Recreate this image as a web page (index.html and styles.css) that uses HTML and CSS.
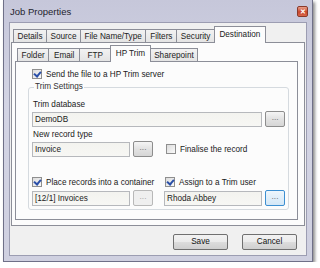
FILE: index.html
```html
<!DOCTYPE html>
<html lang="en">
<head>
    <meta charset="UTF-8">
    <title>Job Properties</title>
    <link rel="stylesheet" href="styles.css">
</head>
<body>
    <div class="window">
        <div class="titlebar">
            <span class="title">Job Properties</span>
            <span class="close-btn">&#x2715;</span>
        </div>
        <div class="client">
            <div class="tabs outer-tabs">
                <div class="tab">Details</div>
                <div class="tab">Source</div>
                <div class="tab">File Name/Type</div>
                <div class="tab">Filters</div>
                <div class="tab">Security</div>
                <div class="tab active">Destination</div>
            </div>
            <div class="panel outer-panel">
                <div class="tabs inner-tabs">
                    <div class="tab">Folder</div>
                    <div class="tab">Email</div>
                    <div class="tab">FTP</div>
                    <div class="tab active">HP Trim</div>
                    <div class="tab">Sharepoint</div>
                </div>
                <div class="panel inner-panel">
                    <div class="check-row send-row">
                        <span class="checkbox checked"></span>
                        <span>Send the file to a HP Trim server</span>
                    </div>
                    <div class="group">
                        <div class="group-title">Trim Settings</div>
                        <div class="field-label first">Trim database</div>
                        <div class="field-row">
                            <div class="textbox wide">DemoDB</div>
                            <div class="dots-btn">...</div>
                        </div>
                        <div class="field-label">New record type</div>
                        <div class="field-row tight">
                            <div class="textbox">Invoice</div>
                            <div class="dots-btn">...</div>
                            <div class="check-row side">
                                <span class="checkbox"></span>
                                <span>Finalise the record</span>
                            </div>
                        </div>
                        <div class="two-col check-line">
                            <div class="check-row">
                                <span class="checkbox checked"></span>
                                <span>Place records into a container</span>
                            </div>
                            <div class="check-row">
                                <span class="checkbox checked"></span>
                                <span>Assign to a Trim user</span>
                            </div>
                        </div>
                        <div class="two-col input-line">
                            <div class="field-row">
                                <div class="textbox">[12/1] Invoices</div>
                                <div class="dots-btn disabled">...</div>
                            </div>
                            <div class="field-row">
                                <div class="textbox">Rhoda Abbey</div>
                                <div class="dots-btn focused">...</div>
                            </div>
                        </div>
                    </div>
                </div>
            </div>
            <div class="buttons">
                <div class="btn">Save</div>
                <div class="btn">Cancel</div>
            </div>
        </div>
    </div>
</body>
</html>
```

FILE: styles.css
```css
body {
    margin: 0;
    background: #ffffff;
    font-family: 'Liberation Sans', Arial, sans-serif;
    font-size: 8.2px;
    color: #1a1a1a;
}
.window {
    margin-left: 3px;
    width: 310px;
    height: 262px;
    box-sizing: border-box;
    display: flex;
    flex-direction: column;
    padding: 0 5px 5px 5px;
    background: linear-gradient(#c6c7da, #d3d4e4 40%, #cfd0e0);
    border: 1px solid #6f7088;
    border-top: none;
    box-shadow: 2px 2px 3px rgba(0,0,0,0.45);
}
.titlebar {
    height: 22px;
    display: flex;
    align-items: center;
    justify-content: space-between;
}
.title {
    padding-left: 1px;
    font-size: 9.5px;
    color: #24242e;
}
.close-btn {
    width: 11px;
    height: 11px;
    margin-top: 1px;
    margin-right: -1px;
    box-sizing: border-box;
    border: 1px solid #8a3a2a;
    border-radius: 2px;
    background: linear-gradient(#e9a08a, #c8452c 55%, #d9664a);
    color: #ffffff;
    font-size: 7px;
    font-weight: bold;
    line-height: 9px;
    text-align: center;
}
.client {
    flex: 1;
    background: #f0f0f0;
    border: 1px solid #9c9db2;
    display: flex;
    flex-direction: column;
    padding: 3px 1px 0 1px;
}
.tabs {
    display: flex;
    align-items: flex-end;
    position: relative;
    z-index: 1;
}
.tab {
    min-width: 31px;
    box-sizing: border-box;
    height: 13px;
    line-height: 13px;
    padding: 0 3.5px;
    text-align: center;
    white-space: nowrap;
    border: 1px solid #8c8e98;
    border-bottom: none;
    border-right: none;
    background: linear-gradient(#f2f2f2, #e4e4e4);
    color: #222;
}
.tab:last-child {
    border-right: 1px solid #8c8e98;
}
.tab.active {
    height: 17px;
    line-height: 15px;
    padding: 0 4.5px;
    background: #fcfcfc;
    margin-bottom: -1px;
    border-right: 1px solid #8c8e98;
}
.tab.active + .tab {
    border-left: none;
}
.outer-tabs {
    padding-left: 2px;
}
.panel {
    border: 1px solid #8c8e98;
    background: #fcfcfc;
}
.outer-panel {
    height: 184px;
    box-sizing: border-box;
    padding: 2px 6px 0 3px;
}
.inner-tabs {
    padding-left: 2px;
}
.inner-panel {
    height: 159px;
    box-sizing: border-box;
    padding: 7px 8px 0 12px;
}
.check-row {
    display: flex;
    align-items: center;
    gap: 4px;
    height: 10px;
    white-space: nowrap;
}
.send-row {
    padding-left: 4px;
}
.checkbox {
    width: 10px;
    height: 10px;
    flex-shrink: 0;
    box-sizing: border-box;
    border: 1px solid #8f8f8f;
    background: linear-gradient(135deg, #dcdcdc, #fafafa);
    position: relative;
}
.checkbox.checked::after {
    content: "";
    position: absolute;
    left: 2px;
    top: 0px;
    width: 3px;
    height: 5px;
    border: solid #2a4fa8;
    border-width: 0 2px 2px 0;
    transform: rotate(40deg);
}
.group {
    margin-top: 8px;
    height: 123px;
    box-sizing: border-box;
    border: 1px solid #d5dadf;
    border-radius: 3px;
    padding: 0 3px;
}
.group-title {
    display: table;
    height: 10px;
    margin: -6px 0 0 2px;
    padding: 0 1px;
    background: #fcfcfc;
    line-height: 10px;
    color: #333;
}
.field-label {
    padding-left: 1px;
    height: 10px;
    line-height: 10px;
    margin-top: 3px;
}
.field-label.first {
    margin-top: 8px;
}
.field-row {
    display: flex;
    align-items: center;
    gap: 3px;
    margin-top: 1px;
}
.field-row.tight {
    margin-top: 1px;
}
.textbox {
    width: 98px;
    height: 15px;
    line-height: 13px;
    box-sizing: border-box;
    border: 1px solid #b6b8bc;
    background: linear-gradient(#f3f3ef, #f7f7f4);
    padding-left: 2px;
    color: #222;
}
.textbox.wide {
    width: 231px;
}
.dots-btn {
    width: 20px;
    height: 16px;
    box-sizing: border-box;
    border: 1px solid #8d8d8d;
    border-radius: 2px;
    background: linear-gradient(#f5f5f5, #e2e2e2 50%, #d6d6d6);
    color: #777;
    text-align: center;
    line-height: 12px;
}
.dots-btn.disabled {
    border-color: #b8b8b8;
    background: #efefef;
    color: #aaa;
}
.dots-btn.focused {
    border-color: #3d8fd1;
    background: linear-gradient(#eef6fc, #d3e7f7);
}
.check-row.side {
    margin-left: 10px;
}
.two-col {
    display: flex;
}
.two-col > :first-child {
    width: 133px;
}
.check-line {
    margin-top: 20px;
}
.input-line {
    margin-top: 3px;
}
.input-line .field-row {
    margin-top: 0;
}
.buttons {
    display: flex;
    justify-content: flex-end;
    gap: 14px;
    margin-top: 8px;
    padding-right: 8px;
}
.btn {
    width: 55px;
    height: 16px;
    box-sizing: border-box;
    border: 1px solid #707070;
    border-radius: 2px;
    background: linear-gradient(#f2f2f2, #ebebeb 50%, #dddddd 51%, #cfcfcf);
    text-align: center;
    line-height: 14px;
    color: #111;
}
```
